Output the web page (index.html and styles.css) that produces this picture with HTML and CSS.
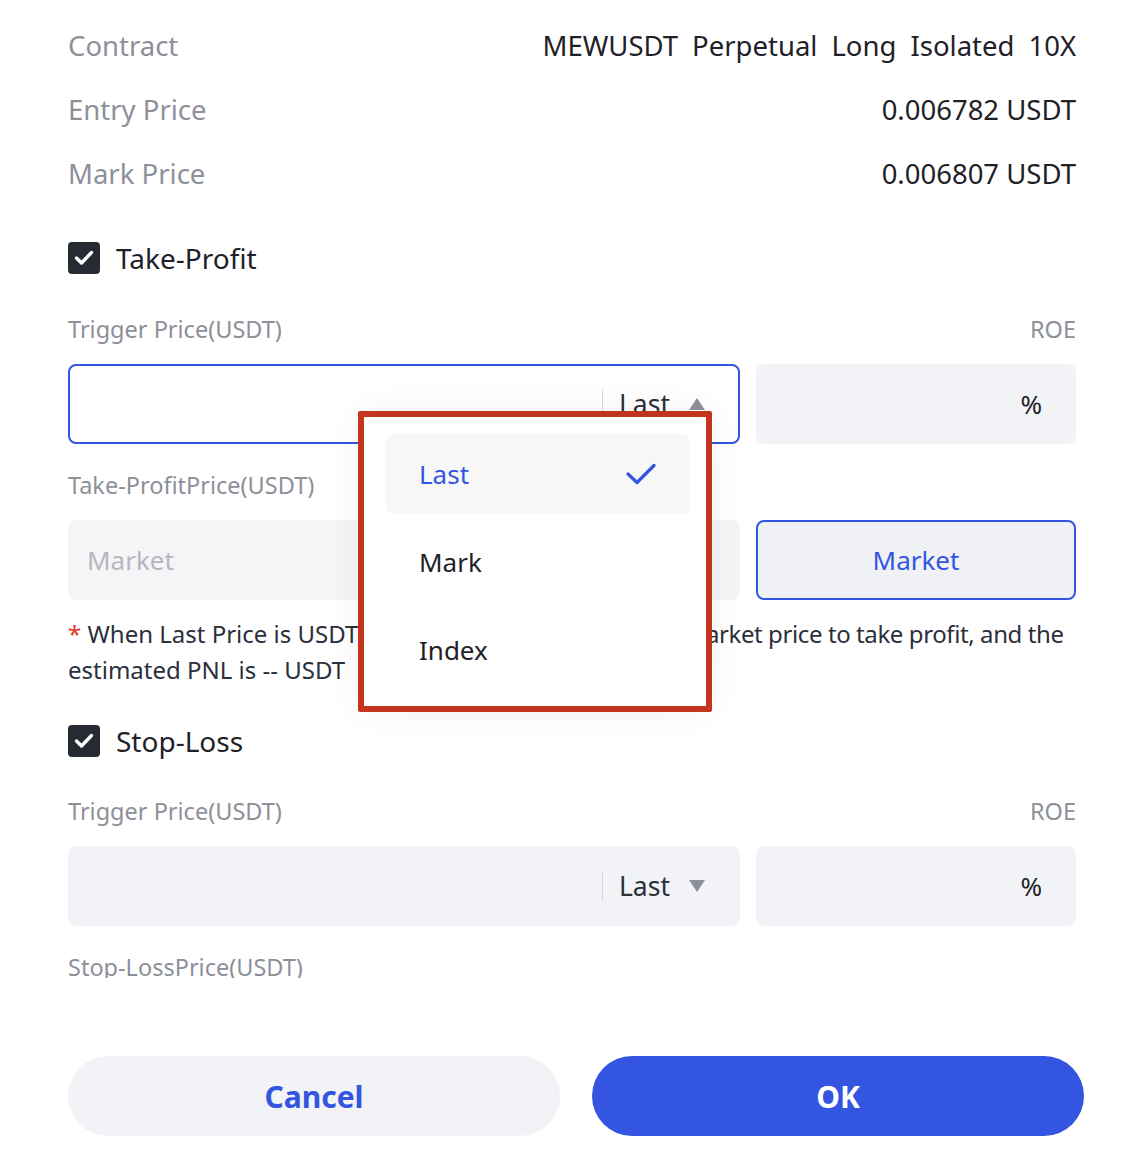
FILE: index.html
```html
<!DOCTYPE html>
<html>
<head>
<meta charset="utf-8">
<link rel="stylesheet" href="styles.css">
</head>
<body>
<div class="scroll">
  <div class="info-row"><span class="lbl">Contract</span><span class="val words"><span>MEWUSDT</span><span>Perpetual</span><span>Long</span><span>Isolated</span><span>10X</span></span></div>
  <div class="info-row"><span class="lbl">Entry Price</span><span class="val">0.006782 USDT</span></div>
  <div class="info-row"><span class="lbl">Mark Price</span><span class="val">0.006807 USDT</span></div>

  <div class="check-row first">
    <span class="box"><svg width="22" height="22" viewBox="0 0 22 22"><path d="M3.5 11 L8.5 16 L18.5 5.5" fill="none" stroke="#fff" stroke-width="3.4" stroke-linecap="round" stroke-linejoin="round"/></svg></span>
    <span class="check-label">Take-Profit</span>
  </div>

  <div class="field-head tp"><span>Trigger Price(USDT)</span><span>ROE</span></div>
  <div class="field-row">
    <div class="input main active">
      <span class="sep"></span><span class="type">Last</span>
      <svg class="tri" width="18" height="14" viewBox="0 0 18 14"><path d="M9 1 L17 13 L1 13 Z" fill="#8d9099"/></svg>
      <div class="annot">
        <div class="menu">
          <div class="item sel"><span>Last</span><svg width="30" height="22" viewBox="0 0 30 22"><path d="M2 11 L11 19.5 L28 2.5" fill="none" stroke="#3355e0" stroke-width="3.2" stroke-linecap="round" stroke-linejoin="round"/></svg></div>
          <div class="item"><span>Mark</span></div>
          <div class="item"><span>Index</span></div>
        </div>
      </div>
    </div>
    <div class="input roe"><span class="pct">%</span></div>
  </div>

  <div class="field-head second"><span>Take-ProfitPrice(USDT)</span></div>
  <div class="field-row">
    <div class="input main light"><span class="placeholder">Market</span></div>
    <div class="market-btn">Market</div>
  </div>

  <p class="note"><span class="star">*</span> When Last Price is USDT,<span class="tight"> the order will be executed at market price to take profit, and the</span><br>estimated PNL is -- USDT</p>

  <div class="check-row">
    <span class="box"><svg width="22" height="22" viewBox="0 0 22 22"><path d="M3.5 11 L8.5 16 L18.5 5.5" fill="none" stroke="#fff" stroke-width="3.4" stroke-linecap="round" stroke-linejoin="round"/></svg></span>
    <span class="check-label">Stop-Loss</span>
  </div>

  <div class="field-head sl"><span>Trigger Price(USDT)</span><span>ROE</span></div>
  <div class="field-row">
    <div class="input main">
      <span class="sep"></span><span class="type">Last</span>
      <svg class="tri" width="18" height="14" viewBox="0 0 18 14"><path d="M1 1 L17 1 L9 13 Z" fill="#8d9099"/></svg>
    </div>
    <div class="input roe"><span class="pct">%</span></div>
  </div>

  <div class="field-head second"><span>Stop-LossPrice(USDT)</span></div>
</div>

<div class="footer">
  <button class="btn cancel">Cancel</button>
  <button class="btn ok">OK</button>
</div>
</body>
</html>
```

FILE: styles.css
```css
* { box-sizing: border-box; }
html, body { margin: 0; padding: 0; background: #fff; }
body {
  width: 1130px;
  font-family: "Noto Sans", "Liberation Sans", sans-serif;
  color: #22252d;
}
.scroll {
  height: 978px;
  overflow: hidden;
  padding: 13px 54px 0 68px;
}
.info-row {
  height: 64px;
  display: flex;
  align-items: center;
  justify-content: space-between;
  font-size: 27.5px;
}
.lbl { color: #8d9099; }
.val { color: #1f2129; }
.words { display: flex; gap: 14px; }
.check-row {
  height: 48px;
  margin-top: 29px;
  display: flex;
  align-items: center;
  gap: 16px;
}
.box {
  width: 32px; height: 32px;
  border-radius: 4px;
  background: #262a33;
  display: flex; align-items: center; justify-content: center;
}
.check-label { font-size: 28px; color: #1f2129; }
.field-head {
  height: 30px;
  margin-top: 27px;
  display: flex;
  justify-content: space-between;
  align-items: center;
  font-size: 23.5px;
  color: #8d9099;
}
.field-head.tp { margin-top: 32px; }
.field-head.sl { margin-top: 31px; }
.field-head.second { margin-top: 26px; }
.field-row {
  margin-top: 20px;
  display: flex;
  gap: 16px;
}
.input {
  height: 80px;
  border-radius: 8px;
  background: #f2f3f6;
  display: flex;
  align-items: center;
  position: relative;
}
.input.main { width: 672px; justify-content: flex-end; padding-right: 34px; }
.input.active { background: #fff; border: 2px solid #3355e0; padding-right: 32px; }
.input.light { background: #f5f5f7; justify-content: flex-start; padding-left: 19px; }
.placeholder { font-size: 26px; color: #b5b7bd; }
.sep { width: 1px; height: 30px; background: #d6d8dd; margin-right: 16px; }
.type { font-size: 26.5px; color: #2b2f3a; margin-right: 18px; }
.tri { display: block; }
.input.roe { width: 320px; justify-content: flex-end; padding-right: 34px; }
.pct { font-size: 26px; color: #1f2129; }
.market-btn {
  width: 320px; height: 80px;
  border: 2px solid #3355e0;
  border-radius: 8px;
  background: #f0f1f5;
  display: flex; align-items: center; justify-content: center;
  font-size: 26px; color: #3355e0;
}
.note {
  margin: 16px 0 0;
  font-size: 24px;
  line-height: 36px;
  color: #2a2f3c;
  white-space: nowrap;
}
.tight { letter-spacing: -0.4px; }
.star { color: #e0392b; }

.annot {
  position: absolute;
  left: 288px;
  top: 45px;
  width: 354px;
  height: 301px;
  border: 6px solid #c8361f;
  border-radius: 2px;
  z-index: 5;
}
.menu {
  position: absolute;
  left: 0; top: 0; right: 0; bottom: 0;
  background: #fff;
  border-radius: 8px;
  box-shadow: 0 0 40px rgba(0,0,0,0.08);
  padding: 17px 16px 0 22px;
  display: flex;
  flex-direction: column;
  gap: 8px;
}
.item {
  height: 80px;
  border-radius: 8px;
  display: flex;
  align-items: center;
  justify-content: space-between;
  padding: 0 34px 0 33px;
  font-size: 26px;
  color: #1f2129;
}
.item.sel { background: #f7f7f8; color: #3355e0; }

.footer {
  padding: 78px 46px 0 68px;
  display: flex;
  gap: 32px;
}
.btn {
  flex: 1;
  height: 80px;
  border: none;
  border-radius: 40px;
  font-family: "Noto Sans", "Liberation Sans", sans-serif;
  font-size: 30px;
  font-weight: 700;
}
.cancel { background: #f2f3f6; color: #3355e0; }
.ok { background: #3355e0; color: #fff; }
```
